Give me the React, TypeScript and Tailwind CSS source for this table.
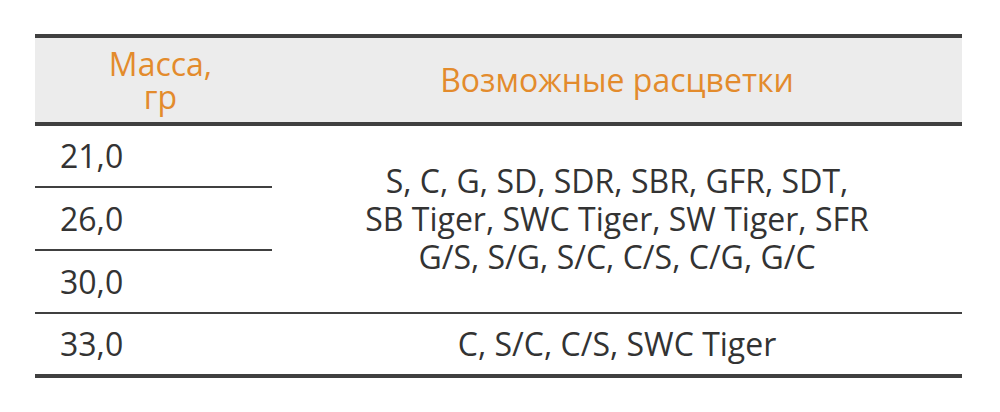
const colors = "S, C, G, SD, SDR, SBR, GFR, SDT,";

export default function App() {
  return (
    <div className="h-[412px] w-[1000px] bg-white pl-[35px] pt-[34px] font-['Open_Sans',sans-serif] text-[#333333]">
      <table className="w-[927px] table-fixed border-collapse">
        <colgroup>
          <col className="w-[237px]" />
          <col />
        </colgroup>
        <thead>
          <tr className="h-[88px] border-y-4 border-[#404040] bg-[#ececec] text-[32px] text-[#e38b2c]">
            <th className="pl-[14px] text-center font-normal leading-[33px]">
              Масса,
              <br />
              гр
            </th>
            <th className="text-center font-normal">Возможные расцветки</th>
          </tr>
        </thead>
        <tbody className="text-[32px]">
          <tr className="h-[63px]">
            <td className="border-b-2 border-[#404040] pl-[25px] align-middle">21,0</td>
            <td rowSpan={3} className="border-b-2 border-[#404040] text-center leading-[38px]">
              {colors}
              <br />
              SB Tiger, SWC Tiger, SW Tiger, SFR
              <br />
              G/S, S/G, S/C, C/S, C/G, G/C
            </td>
          </tr>
          <tr className="h-[63px]">
            <td className="border-b-2 border-[#404040] pl-[25px]">26,0</td>
          </tr>
          <tr className="h-[63px]">
            <td className="border-b-2 border-[#404040] pl-[25px]">30,0</td>
          </tr>
          <tr className="h-[63px] border-b-4 border-[#404040]">
            <td className="pl-[25px]">33,0</td>
            <td className="text-center">C, S/C, C/S, SWC Tiger</td>
          </tr>
        </tbody>
      </table>
    </div>
  );
}
